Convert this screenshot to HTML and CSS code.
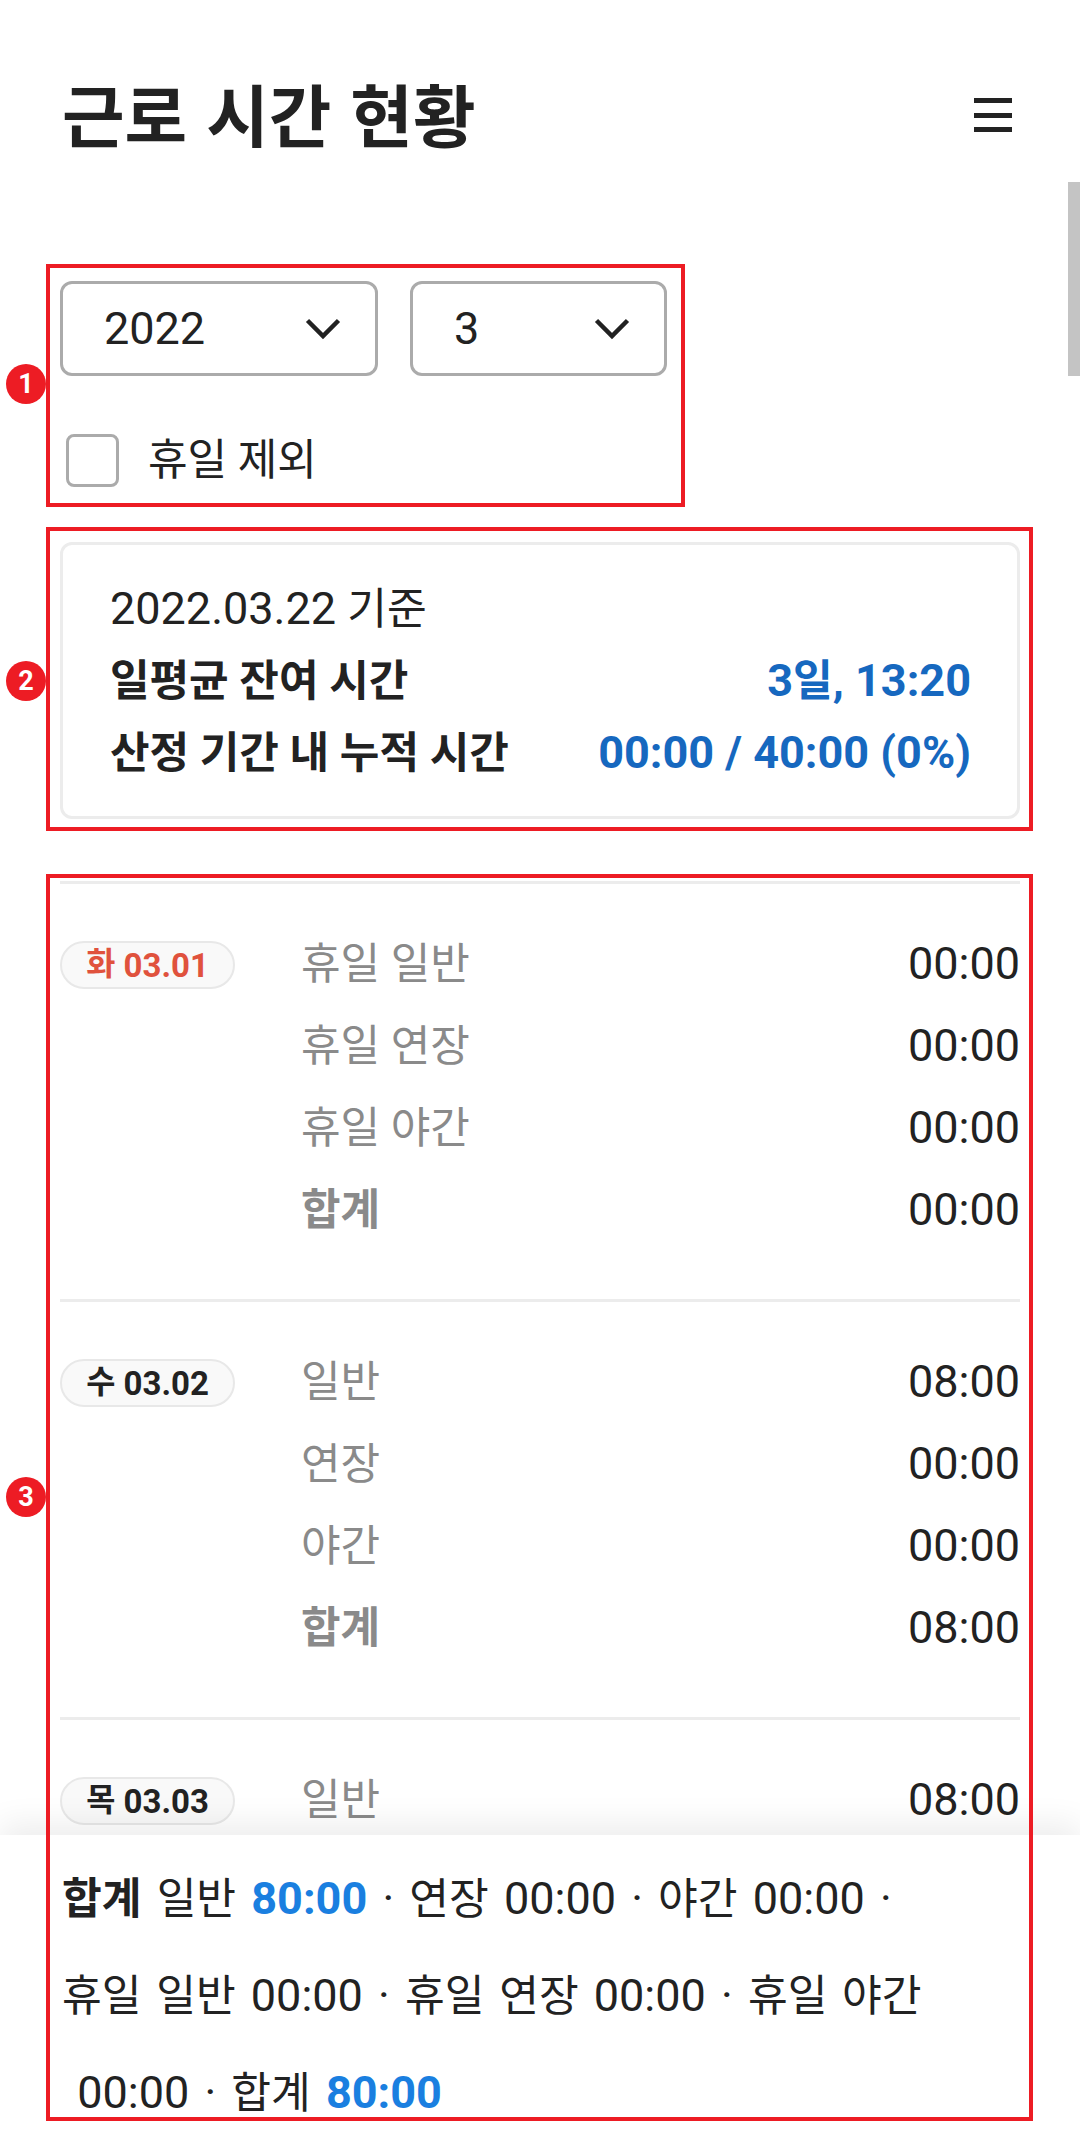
FILE: index.html
```html
<!DOCTYPE html>
<html lang="ko">
<head>
    <meta charset="UTF-8">
    <meta name="viewport" content="width=device-width, initial-scale=1.0">
    <title>근로 시간 현황</title>
    <link rel="stylesheet" href="styles.css">
</head>
<body>
    <div class="app">
        <header class="top">
            <h1>근로 시간 현황</h1>
            <button class="menu" aria-label="메뉴"><span></span><span></span><span></span></button>
        </header>

        <main class="main">
            <!-- 1. 조회 조건 -->
            <section class="filter mark" data-n="1">
                <div class="selects">
                    <div class="select year">
                        2022
                        <svg class="chev" viewBox="0 0 36 22"><path d="M2.5 2.5 L18 18 L33.5 2.5"/></svg>
                    </div>
                    <div class="select month">
                        3
                        <svg class="chev" viewBox="0 0 36 22"><path d="M2.5 2.5 L18 18 L33.5 2.5"/></svg>
                    </div>
                </div>
                <label class="check">
                    <span class="box"></span>휴일 제외
                </label>
            </section>

            <!-- 2. 요약 -->
            <section class="summary mark" data-n="2">
                <div class="card">
                    <div class="card-row">
                        <span>2022.03.22 <span class="ko">기준</span></span>
                    </div>
                    <div class="card-row">
                        <span class="name">일평균 잔여 시간</span>
                        <span class="val">3<span class="ko">일</span>, 13:20</span>
                    </div>
                    <div class="card-row">
                        <span class="name">산정 기간 내 누적 시간</span>
                        <span class="val">00:00 / 40:00 (0%)</span>
                    </div>
                </div>
            </section>

            <!-- 3. 일자별 목록 (하단 합계 바 아래로 이어짐) -->
            <section class="days mark" data-n="3">
                <div class="list">
                    <div class="day">
                        <div class="pill holiday"><span class="ko">화</span>&nbsp;03.01</div>
                        <div class="rows">
                            <div class="row"><span class="name">휴일 일반</span><span>00:00</span></div>
                            <div class="row"><span class="name">휴일 연장</span><span>00:00</span></div>
                            <div class="row"><span class="name">휴일 야간</span><span>00:00</span></div>
                            <div class="row total"><span class="name">합계</span><span>00:00</span></div>
                        </div>
                    </div>
                    <div class="day">
                        <div class="pill"><span class="ko">수</span>&nbsp;03.02</div>
                        <div class="rows">
                            <div class="row"><span class="name">일반</span><span>08:00</span></div>
                            <div class="row"><span class="name">연장</span><span>00:00</span></div>
                            <div class="row"><span class="name">야간</span><span>00:00</span></div>
                            <div class="row total"><span class="name">합계</span><span>08:00</span></div>
                        </div>
                    </div>
                    <div class="day">
                        <div class="pill"><span class="ko">목</span>&nbsp;03.03</div>
                        <div class="rows">
                            <div class="row"><span class="name">일반</span><span>08:00</span></div>
                        </div>
                    </div>
                </div>
            </section>
        </main>

        <!-- 하단 합계 -->
        <p class="sum"><b class="ko">합계</b> <span class="ko">일반</span> <b class="hl">80:00</b> · <span class="ko">연장</span> 00:00 · <span class="ko">야간</span> 00:00 · <span class="ko">휴일 일반</span> 00:00 · <span class="ko">휴일 연장</span> 00:00 · <span class="ko">휴일 야간</span> &nbsp;00:00 · <span class="ko">합계</span> <b class="hl">80:00</b></p>

        <div class="scroll"></div>
    </div>
</body>
</html>
```

FILE: styles.css
```css
* {
    box-sizing: border-box;
}
body {
    margin: 0;
    font-family: Roboto, "Noto Sans CJK KR", sans-serif;
    color: #222;
    background-color: #fff;
}
.app {
    position: relative;
    height: 100vh;
    overflow: hidden;
    display: flex;
    flex-direction: column;
}

/* Hangul runs a little smaller than the digits */
.ko {
    font-size: 0.96em;
    line-height: 1;
    white-space: nowrap;
}

/* Header */
.top {
    height: 226px;
    flex-shrink: 0;
    display: flex;
    align-items: center;
    justify-content: space-between;
    padding: 0 68px 0 62px;
}
.top h1 {
    margin: 0;
    font-family: "Noto Sans CJK KR", sans-serif;
    font-size: 68px;
    font-weight: 700;
    line-height: 1;
}
.menu {
    width: 38px;
    height: 34px;
    margin-top: 4px;
    padding: 0;
    border: none;
    background: none;
    display: flex;
    flex-direction: column;
    justify-content: space-between;
}
.menu span {
    display: block;
    height: 5px;
    background-color: #222;
}

.main {
    flex: 1;
    min-height: 0;
    display: flex;
    flex-direction: column;
    padding: 0 60px;
}

/* Annotation boxes */
.mark {
    position: relative;
}
.mark::after {
    content: "";
    position: absolute;
    border: 4px solid #ed1c24;
    pointer-events: none;
    z-index: 5;
}
.mark::before {
    content: attr(data-n);
    position: absolute;
    left: -54px;
    top: 50%;
    margin-top: -20px;
    width: 40px;
    height: 40px;
    border-radius: 50%;
    background-color: #ed1c24;
    color: #fff;
    font: 700 27px/40px Roboto, sans-serif;
    text-align: center;
    z-index: 6;
}

/* 1. Filter */
.filter {
    width: 607px;
    margin-top: 55px;
    flex-shrink: 0;
}
.filter::after {
    top: -17px;
    bottom: -20px;
    left: -14px;
    right: -18px;
}
.selects {
    display: flex;
    gap: 32px;
}
.select {
    height: 95px;
    border: 3px solid #ababab;
    border-radius: 12px;
    display: flex;
    align-items: center;
    justify-content: space-between;
    padding: 0 34px 0 41px;
    font-size: 45px;
}
.select.year {
    width: 318px;
}
.select.month {
    width: 257px;
}
.chev {
    width: 36px;
    height: 22px;
    fill: none;
    stroke: #222;
    stroke-width: 4.5;
}
.check {
    display: flex;
    align-items: center;
    gap: 29px;
    margin-top: 58px;
    padding-left: 6px;
    font-size: 43px;
    line-height: 53px;
}
.box {
    width: 53px;
    height: 53px;
    border: 3px solid #ababab;
    border-radius: 8px;
}

/* 2. Summary */
.summary {
    margin-top: 55px;
    flex-shrink: 0;
}
.summary::after {
    top: -15px;
    bottom: -12px;
    left: -14px;
    right: -13px;
}
.card {
    border: 3px solid #ececec;
    border-radius: 12px;
    padding: 28px 46px 27px 47px;
}
.card-row {
    display: flex;
    justify-content: space-between;
    font-size: 45px;
    line-height: 72px;
}
.card-row .name {
    font-size: 43px;
    font-weight: 700;
}
.card-row .val {
    color: #1668bf;
    font-weight: 700;
}

/* 3. Day list (runs on under the totals bar) */
.days {
    margin-top: 62px;
    flex: 1;
    min-height: 0;
    display: flex;
    flex-direction: column;
}
.days::after {
    top: -7px;
    bottom: -286px;
    left: -14px;
    right: -13px;
}
.days::before {
    margin-top: 119px;
}
.list {
    flex: 1;
    min-height: 0;
    overflow: hidden;
    border-top: 3px solid #ececec;
}
.day {
    display: flex;
    align-items: flex-start;
    border-bottom: 3px solid #ececec;
    padding: 39px 0 48px;
}
.pill {
    width: 175px;
    height: 48px;
    margin-top: 18px;
    flex-shrink: 0;
    border: 2px solid #e8e8e8;
    border-radius: 24px;
    background-color: #f9f9f9;
    display: flex;
    align-items: center;
    justify-content: center;
    font-size: 33px;
    font-weight: 700;
}
.pill.holiday {
    color: #e0523d;
}
.rows {
    flex: 1;
    margin-left: 66px;
}
.row {
    display: flex;
    justify-content: space-between;
    font-size: 45px;
    line-height: 82px;
}
.row .name {
    font-size: 43px;
    color: #8a8a8a;
}
.row.total .name {
    font-weight: 700;
}

/* Bottom totals bar */
.sum {
    position: relative;
    flex-shrink: 0;
    margin: 0;
    padding: 15px 62px 3px;
    background-color: #fff;
    box-shadow: 0 -12px 30px rgba(0, 0, 0, 0.07);
    font-size: 45px;
    line-height: 97px;
    word-spacing: 4px;
    z-index: 2;
}
.sum b {
    font-weight: 700;
}
.sum .hl {
    color: #1a7fe0;
}

.scroll {
    position: absolute;
    right: 0;
    top: 182px;
    width: 12px;
    height: 194px;
    background-color: #c4c4c4;
}
```
